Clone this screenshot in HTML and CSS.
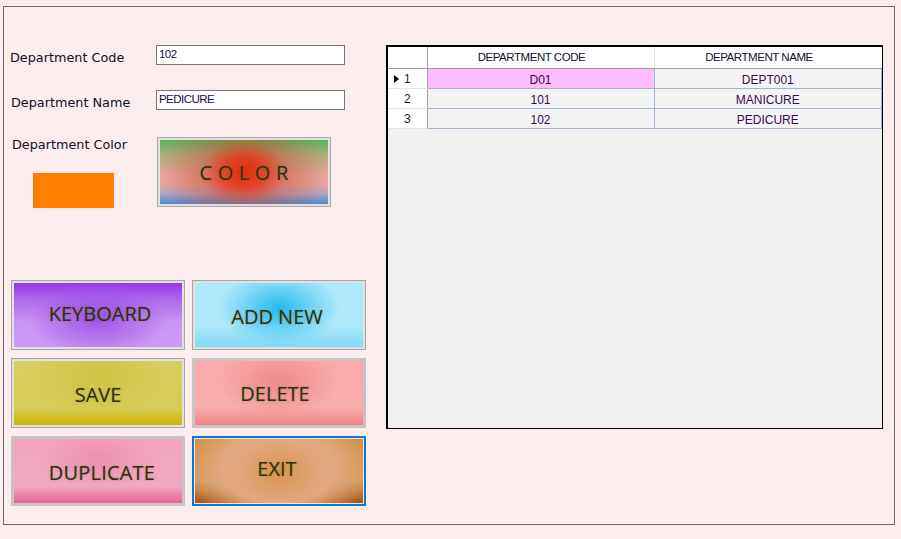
FILE: index.html
```html
<!DOCTYPE html>
<html lang="en">
<head>
<meta charset="utf-8">
<title>Department</title>
<link rel="stylesheet" href="styles.css">
</head>
<body>
<main class="frame">
  <section class="left">
    <div class="field code">
      <label class="label">Department Code</label>
      <div class="input">102</div>
    </div>
    <div class="field name">
      <label class="label">Department Name</label>
      <div class="input">PEDICURE</div>
    </div>
    <div class="color-row">
      <div class="color-left">
        <div class="label color-label">Department Color</div>
        <div class="swatch"></div>
      </div>
      <button class="btn b-color"><span>C O L O R</span></button>
    </div>
    <div class="buttons">
      <button class="btn b-keyboard"><span>KEYBOARD</span></button>
      <button class="btn b-add"><span>ADD NEW</span></button>
      <button class="btn b-save"><span>SAVE</span></button>
      <button class="btn b-delete"><span>DELETE</span></button>
      <button class="btn b-duplicate"><span>DUPLICATE</span></button>
      <button class="btn b-exit"><span>EXIT</span></button>
    </div>
  </section>
  <section class="grid">
    <table>
      <thead>
        <tr><th class="rh"></th><th class="c1">DEPARTMENT CODE</th><th class="c2">DEPARTMENT NAME</th></tr>
      </thead>
      <tbody>
        <tr class="sel"><td class="rh"><span class="arrow"></span>1</td><td class="pink">D01</td><td>DEPT001</td></tr>
        <tr><td class="rh">2</td><td>101</td><td>MANICURE</td></tr>
        <tr><td class="rh">3</td><td>102</td><td>PEDICURE</td></tr>
      </tbody>
    </table>
  </section>
</main>
</body>
</html>
```

FILE: styles.css
```css
* { box-sizing: border-box; }
html, body { margin: 0; height: 100%; }
body {
  background: #fbeded;
  padding: 6px 6px 14px 3px;
  overflow: hidden;
}
.frame {
  width: 892px;
  height: 519px;
  border: 1px solid #6f6a6a;
  display: flex;
  align-items: flex-start;
  background: #fbeded;
}
.left {
  width: 382px;
  flex: none;
  padding: 38px 0 0 6px;
}
.field {
  display: flex;
  align-items: center;
  height: 20px;
  margin-bottom: 25px;
}
.field.name { margin-bottom: 27px; }
.label {
  font: 12.8px "DejaVu Sans", sans-serif;
  color: #10102a;
  white-space: nowrap;
}
.field .label { width: 146px; position: relative; top: 2px; }
.field.name .label { padding-left: 1px; }
.input {
  width: 189px;
  height: 20px;
  border: 1px solid #777;
  background: #fff;
  font: 11.5px/17px "Liberation Sans", sans-serif;
  letter-spacing: -.55px;
  color: #1a0a50;
  padding: 0 2px;
}
.color-row {
  display: flex;
  height: 143px;
}
.color-left { width: 147px; padding-left: 2px; }
.color-label { line-height: 16px; }
.swatch {
  width: 81px;
  height: 35px;
  background: #ff8000;
  margin: 20px 0 0 21px;
}
.buttons {
  display: grid;
  grid-template-columns: 174px 174px;
  grid-auto-rows: 70px;
  column-gap: 7px;
  row-gap: 8px;
  padding-left: 1px;
}
.btn {
  width: 174px;
  height: 70px;
  padding: 0;
  border: 1px solid #aaa7a7;
  outline: 0;
  font: 20px "Open Sans", sans-serif;
  color: #2c300c;
  text-shadow: 0 0 2px rgba(100,110,40,.55);
  box-shadow: inset 0 0 0 2px #e2e0e0;
  display: flex;
  align-items: center;
  justify-content: center;
}
.btn span { display: block; }
.b-color {
  letter-spacing: .2px;
  background:
    radial-gradient(ellipse 85px 62px at 50% 50%, #e32c0b 0%, rgba(227,44,11,.8) 25%, rgba(200,70,40,.45) 50%, rgba(190,80,50,0) 100%),
    linear-gradient(180deg, #4cb35c 0%, #a9b07f 24%, #e8a7a0 52%, #e8a7a0 68%, #b0a6c4 82%, #3f83cc 100%);
}
.b-keyboard {
  background:
    radial-gradient(ellipse 70px 38px at 50% 55%, #9d51e4 0%, rgba(157,81,228,0) 100%),
    linear-gradient(180deg, #9130e4 0%, #ac66ec 25%, #c995f5 60%, #cc9cf6 100%);
}
.b-keyboard span { transform: translate(2px, -2px); }
.b-add {
  background:
    radial-gradient(ellipse 60px 38px at 50% 40%, #28b9f0 0%, rgba(40,185,240,0) 100%),
    linear-gradient(180deg, #aee9fa 0%, #aeeaf9 65%, #7dd9f3 100%);
}
.b-add span { transform: translate(-2px, 1px); }
.b-save {
  background:
    radial-gradient(ellipse 80px 40px at 50% 25%, #cfc345 0%, rgba(207,195,69,0) 100%),
    linear-gradient(180deg, #d7cf62 0%, #d6cc58 72%, #c8b300 100%);
}
.b-save span { transform: translate(0, 1px); }
.b-delete {
  border: 3px solid #c6c4c4;
  box-shadow: none;
  background:
    radial-gradient(ellipse 60px 36px at 50% 32%, #ee8a8c 0%, rgba(238,138,140,0) 100%),
    linear-gradient(180deg, #f9a9ab 0%, #f9abad 72%, #ef8387 100%);
}
.b-delete span { transform: translate(-4px, 0); }
.b-duplicate {
  border: 3px solid #c6c4c4;
  box-shadow: none;
  background:
    radial-gradient(ellipse 60px 30px at 50% 30%, #ee8fb0 0%, rgba(238,143,176,0) 100%),
    linear-gradient(180deg, #f1a4c0 0%, #f1a6c2 74%, #e96595 100%);
}
.b-duplicate span { transform: translate(4px, 1px); letter-spacing: .2px; }
.b-exit {
  border: 2px solid #0a78d7;
  box-shadow: inset 0 0 0 1px #f3e6d6;
  background:
    radial-gradient(ellipse 45px 32px at 50% 52%, #dc9450 0%, rgba(220,148,80,0) 100%),
    radial-gradient(ellipse 95px 60px at 50% 45%, #e0a97d 60%, rgba(224,169,125,0) 100%),
    linear-gradient(180deg, #d48e3e 0%, #d49a5c 65%, #a2530f 100%);
}
.b-exit span { transform: translate(-2px, -3px); }
.grid {
  width: 497px;
  height: 384px;
  margin-top: 38px;
  flex: none;
  border: 2px solid #000;
  border-right-width: 1px;
  border-bottom-width: 1px;
  background: #f0f0f0;
}
table {
  border-collapse: collapse;
  table-layout: fixed;
  width: 494px;
  font: 12px "Liberation Sans", sans-serif;
}
th {
  height: 21px;
  background: #fff;
  font-weight: 400;
  font-size: 11.5px;
  letter-spacing: -.45px;
  color: #12122a;
  padding: 0 18px 0 0;
  border-right: 1px solid #e3e3e3;
  border-bottom: 1px solid #a0a0a0;
}
th.rh { width: 39px; padding: 0; border-right: 1px solid #a0a0a0; }
th.c1 { width: 227px; }
th.c2 { border-right: 0; }
td {
  height: 20px;
  padding: 3px 0 0;
  text-align: center;
  background: #f4f4f4;
  color: #3a0a50;
  border-right: 1px solid #9db6d3;
  border-bottom: 1px solid #9db6d3;
}
td.rh {
  padding-top: 1px;
  background: #fff;
  color: #222;
  border-right: 1px solid #a0a0a0;
  border-bottom: 1px solid #e3e3e3;
  position: relative;
}
td.pink { background: #ffbdff; }
.arrow {
  position: absolute;
  left: 6px;
  top: 6px;
  border-left: 5px solid #000;
  border-top: 4.5px solid transparent;
  border-bottom: 4.5px solid transparent;
}
```
